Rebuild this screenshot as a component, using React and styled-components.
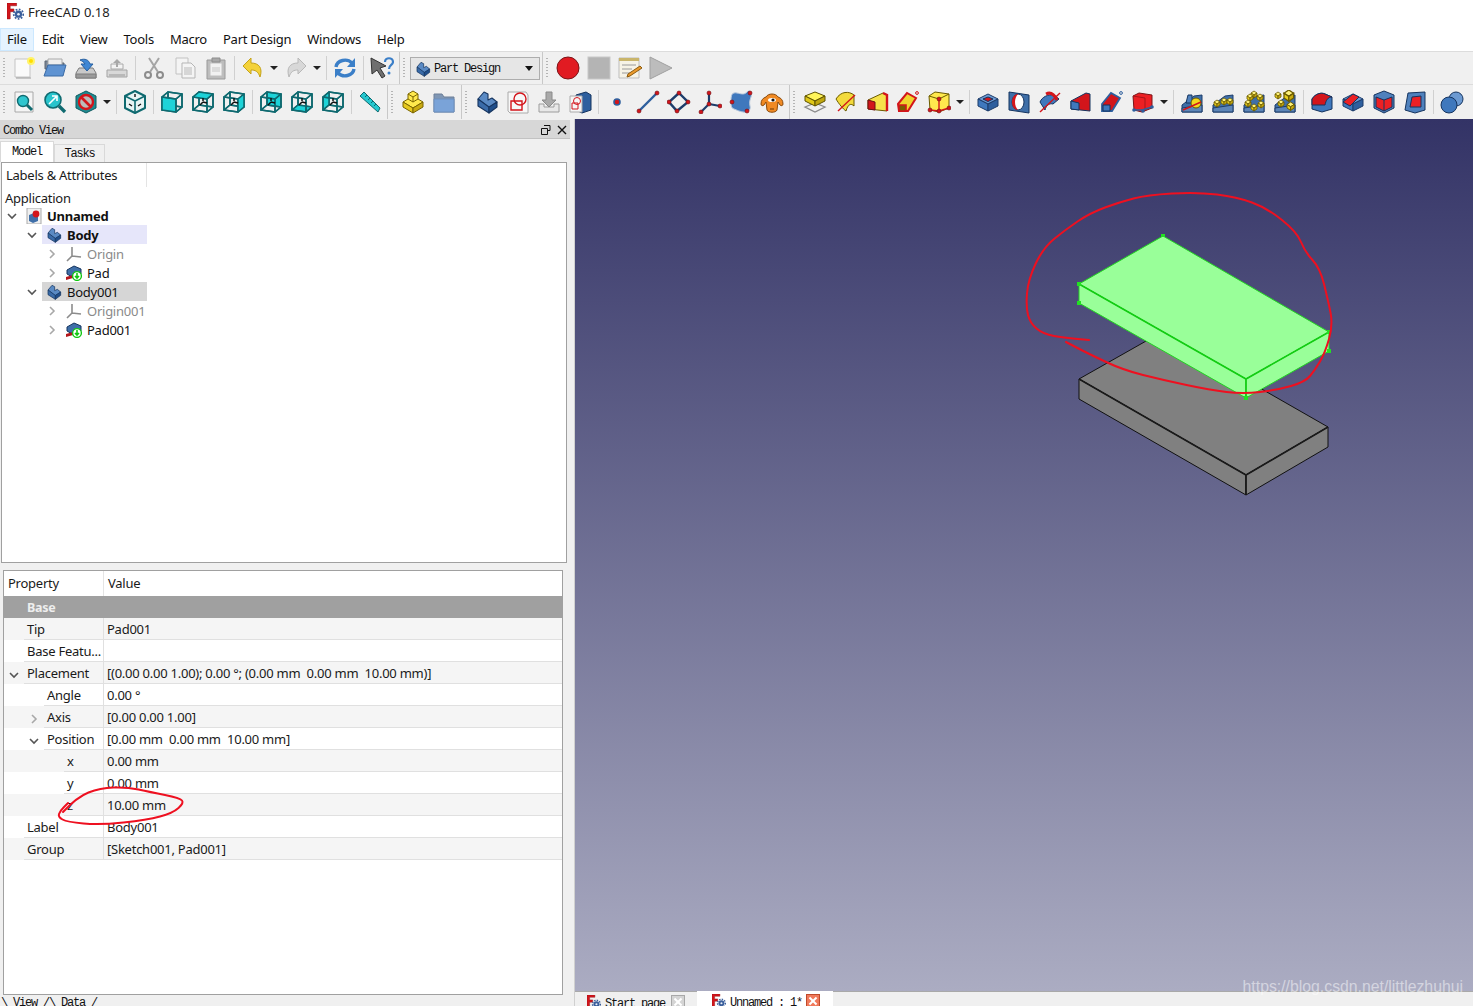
import React from "react";
import styled, { createGlobalStyle } from "styled-components";

const GlobalStyle = createGlobalStyle`
  html, body {
    margin: 0;
    padding: 0;
    background: #f0f0f0;
    font-family: "Noto Sans", "Open Sans", sans-serif;
    font-size: 13px;
    letter-spacing: -0.25px;
    color: #1a1a1a;
  }
`;

/* ---------- icon parts ---------- */

const Box = ({ top, left, right, line = "#1d3d6b" }) => (
  <g stroke={line} strokeWidth="1" strokeLinejoin="round">
    <polygon points="12,4 22,9 12,14 2,9" fill={top} />
    <polygon points="2,9 12,14 12,21 2,16" fill={left} />
    <polygon points="12,14 22,9 22,16 12,21" fill={right} />
  </g>
);

const ViewCube = ({ face }) => {
  const fill = (name) => (face === name ? "#1ed3d8" : "none");
  const inner = face === "front" || face === "none" ? null : "#0f6a70";
  return (
    <g stroke="#0f6a70" strokeWidth="1.6" strokeLinejoin="round">
      <polygon points="8,2 22,4 22,17 8,15" fill={fill("back")} />
      <polygon points="2,7 8,2 8,15 2,20" fill={fill("left")} />
      <polygon points="2,20 16,22 22,17 8,15" fill={fill("bottom")} />
      <polygon points="2,7 16,9 16,22 2,20" fill={fill("front")} />
      <polygon points="2,7 8,2 22,4 16,9" fill={fill("top")} />
      <polygon points="16,9 22,4 22,17 16,22" fill={fill("right")} />
      {inner && <path d="M12 8v3M12 12l-3 3M12 12l4 1" stroke="#111" strokeWidth="1.5" />}
    </g>
  );
};

const IsoCube = () => (
  <g strokeLinejoin="round">
    <polygon points="12,1 22,6 22,18 12,23 2,18 2,6" fill="#e8f4f4" stroke="#0f6a70" strokeWidth="2" />
    <path d="M2 6l10 5 10-5M12 11v12" fill="none" stroke="#0f6a70" strokeWidth="1.6" />
    <path d="M12 4v3M6 14l3 2M18 14l-3 2" stroke="#111" strokeWidth="1.4" />
  </g>
);

const Vertex = ({ x, y, r = 2 }) => <circle cx={x} cy={y} r={r} fill="#d3151b" stroke="#6d1014" strokeWidth=".6" />;

const Plate = ({ color = "#3f6fa8" }) => (
  <g stroke="#1d3d6b" strokeWidth="1">
    <polygon points="2,15 14,6 22,5 22,22 2,22" fill={color} />
    <polygon points="2,18 22,15 22,22 2,22" fill="#5d86b8" />
  </g>
);

const Gold = ({ x, y, s = 1 }) => (
  <g transform={`translate(${x} ${y}) scale(${s})`} stroke="#6b5b00" strokeWidth=".8">
    <polygon points="0,2 3,0 6,2 3,4" fill="#fff27a" />
    <polygon points="0,2 3,4 3,7 0,5" fill="#e8cf1e" />
    <polygon points="3,4 6,2 6,5 3,7" fill="#c9ac10" />
  </g>
);

const icons = {
  fresh: (
    <>
      <path d="M3 3h15v18H3z" fill="#fafafa" stroke="#c4c4c4" />
      <path d="M4 22h15" stroke="#999" />
      <circle cx="19" cy="5" r="4" fill="#fff36a" />
      <circle cx="19" cy="5" r="2" fill="#ffdd00" />
    </>
  ),
  open: (
    <>
      <path d="M2 5h7l2 2h10v6H2z" fill="#7c8796" stroke="#5d6672" />
      <path d="M5 3h14v6H5z" fill="#eee" stroke="#aaa" />
      <path d="M5 9h18l-3 11H1z" fill="#5f93d2" stroke="#3a6aa5" />
    </>
  ),
  save: (
    <>
      <path d="M5 12h14l3 5v5H2v-5z" fill="#c9c9c9" stroke="#7d7d7d" />
      <path d="M2 18h20v4H2z" fill="#9a9a9a" stroke="#7d7d7d" />
      <path d="M6 4c5-2 9 0 10 4h3l-6 7-6-7h4c-1-2-3-3-5-4z" fill="#3f87d4" stroke="#275f9f" />
    </>
  ),
  saveAs: (
    <>
      <path d="M6 8h12v5H6z" fill="#f3f3f3" stroke="#aaa" />
      <path d="M2 14h20v7H2z" fill="#d8d8d8" stroke="#a3a3a3" />
      <path d="M4 18h16v3H4z" fill="#b8b8b8" />
      <path d="M12 3l4 4h-3v4h-2V7H8z" fill="#a8a8a8" />
    </>
  ),
  cut: (
    <g fill="none" stroke="#a4a4a4" strokeWidth="2">
      <circle cx="6" cy="19" r="3" stroke="#8c8c8c" />
      <circle cx="18" cy="19" r="3" stroke="#8c8c8c" />
      <path d="M8 16L17 2M16 16L7 2" />
    </g>
  ),
  copy: (
    <>
      <path d="M3 2h12v16H3z" fill="#f4f4f4" stroke="#c2c2c2" />
      <path d="M9 7h9l4 4v11H9z" fill="#f4f4f4" stroke="#b5b5b5" />
      <path d="M11 11h8v8h-8z" fill="#d6d6d6" />
    </>
  ),
  paste: (
    <>
      <path d="M3 4h18v19H3z" fill="#bdbdbd" stroke="#9a9a9a" />
      <path d="M6 7h12v13H6z" fill="#f2f2f2" stroke="#c0c0c0" />
      <path d="M8 2h8v4H8z" fill="#a8a8a8" stroke="#8c8c8c" />
      <path d="M8 11h8v5H8z" fill="#dcdcdc" />
    </>
  ),
  undo: (
    <path d="M2 10l8-8v5c8 0 12 5 9 14-2-6-5-7-9-7v4z" fill="#f4d23a" stroke="#c4a21a" strokeLinejoin="round" />
  ),
  redo: (
    <path d="M22 10l-8-8v5C6 7 2 12 5 21c2-6 5-7 9-7v4z" fill="#d8d8d8" stroke="#b8b8b8" strokeLinejoin="round" />
  ),
  refresh: (
    <g fill="none" stroke="#3b7fc8" strokeWidth="3.4">
      <path d="M3 11c1-7 11-9 16-4" />
      <path d="M21 13c-1 7-11 9-16 4" />
      <path d="M22 2v9h-8z" fill="#3b7fc8" stroke="none" />
      <path d="M2 22v-9h8z" fill="#3b7fc8" stroke="none" />
    </g>
  ),
  whatsThis: (
    <>
      <path d="M1 2l15 8-6 2 5 8-3 2-5-8-5 4z" fill="#6f6f6f" stroke="#333" strokeLinejoin="round" />
      <path d="M15 6c0-5 8-5 8 0 0 3-4 3-4 7" fill="none" stroke="#3b7fc8" strokeWidth="2.2" />
      <circle cx="19" cy="17" r="1.5" fill="#3b7fc8" />
    </>
  ),
  fitAll: (
    <>
      <path d="M3 2h18v20H3z" fill="#f5f5f5" stroke="#a8a8a8" />
      <circle cx="11" cy="11" r="5.5" fill="#2fc6cf" stroke="#0f6a70" strokeWidth="1.4" />
      <path d="M15 15l5 5" stroke="#0f6a70" strokeWidth="3" />
    </>
  ),
  fitSel: (
    <>
      <circle cx="10" cy="10" r="8" fill="#29c4cc" stroke="#0f6a70" strokeWidth="1.6" />
      <path d="M6 14l7-7M9 6h5v5" fill="none" stroke="#fff" strokeWidth="1.6" />
      <path d="M16 16l6 6" stroke="#0f6a70" strokeWidth="3.4" />
    </>
  ),
  noDraw: (
    <>
      <polygon points="12,1 22,6 22,18 12,23 2,18 2,6" fill="#1c8c92" stroke="#0f5a60" />
      <circle cx="12" cy="12" r="7" fill="#bbb" stroke="#d3151b" strokeWidth="2.4" />
      <path d="M7 7l10 10" stroke="#d3151b" strokeWidth="2.6" />
    </>
  ),
  iso: <IsoCube />,
  front: <ViewCube face="front" />,
  top: <ViewCube face="top" />,
  right: <ViewCube face="right" />,
  rear: <ViewCube face="back" />,
  bottom: <ViewCube face="bottom" />,
  left: <ViewCube face="left" />,
  measure: (
    <>
      <polygon points="2,6 6,2 22,18 20,22" fill="#26c7cf" stroke="#0f6a70" />
      <path d="M7 7l2-2M10 10l2-2M13 13l2-2M16 16l2-2" stroke="#0f6a70" />
    </>
  ),
  part: (
    <g stroke="#7a6500" strokeWidth="1" strokeLinejoin="round">
      <polygon points="7,4 12,1 17,4 17,9 22,12 12,18 2,12 7,9" fill="#ffe94d" />
      <path d="M7 4l5 3 5-3M7 9l5 3 5-3M12 7v5" fill="none" />
      <polygon points="2,12 12,18 12,23 2,17" fill="#e6c81e" />
      <polygon points="12,18 22,12 22,17 12,23" fill="#c9aa12" />
    </g>
  ),
  folder: (
    <>
      <path d="M2 4h8l2 3h10v15H2z" fill="#7f96b4" stroke="#6c7f98" />
      <path d="M2 9h20v13H2z" fill="#7aa3d8" stroke="#6d8fbd" />
    </>
  ),
  body: (
    <g stroke="#15345f" strokeWidth="1.1" strokeLinejoin="round">
      <polygon points="3,9 9,2 13,4 13,10 17,8 22,12 14,18" fill="#5a8ac4" />
      <polygon points="3,9 14,17 14,23 3,16" fill="#3a6ba8" />
      <polygon points="14,17 22,12 22,17 14,23" fill="#1f4e8b" />
    </g>
  ),
  sketch: (
    <>
      <path d="M2 2h18l2 3v18H4l-2-2z" fill="#f7f7f7" stroke="#aaa" />
      <path d="M5 11h11v9H5z" fill="none" stroke="#d3151b" strokeWidth="1.4" />
      <circle cx="14" cy="9" r="6" fill="none" stroke="#d3151b" strokeWidth="1.4" />
    </>
  ),
  importShape: (
    <>
      <path d="M2 14h5v3h10v-3h5v8H2z" fill="#e8e8e8" stroke="#9c9c9c" />
      <path d="M9 2h6v8h4l-7 7-7-7h4z" fill="#a9a9a9" stroke="#8a8a8a" />
    </>
  ),
  bodySketch: (
    <>
      <polygon points="8,5 18,2 23,5 23,20 14,23 8,20" fill="#2e5f9e" stroke="#15345f" />
      <path d="M2 6h12v16H2z" fill="#f6f6f6" stroke="#aaa" />
      <circle cx="9" cy="11" r="3.5" fill="none" stroke="#d3151b" />
      <path d="M4 13h6v6H4z" fill="none" stroke="#d3151b" />
    </>
  ),
  point: <circle cx="12" cy="12" r="3" fill="#d3151b" stroke="#2e5f9e" strokeWidth="1.6" />,
  line: (
    <>
      <path d="M3 21L21 3" stroke="#2e5f9e" strokeWidth="2.4" />
      <Vertex x={3} y={21} />
      <Vertex x={21} y={3} />
    </>
  ),
  plane: (
    <>
      <polygon points="12,3 21,12 10,21 2,12" fill="none" stroke="#1d3d6b" strokeWidth="2.4" />
      <Vertex x={12} y={3} />
      <Vertex x={21} y={12} />
      <Vertex x={10} y={21} />
      <Vertex x={2} y={12} />
    </>
  ),
  axes: (
    <>
      <path d="M11 3v11M11 14l11 2M11 14l-8 8" stroke="#1d3d6b" strokeWidth="2.2" />
      <Vertex x={11} y={3} />
      <Vertex x={11} y={14} />
      <Vertex x={22} y={16} />
      <Vertex x={3} y={22} />
    </>
  ),
  blob: (
    <>
      <path d="M2 11c0-6 1-9 6-8s7 2 10-1 5 2 4 5-2 5-1 9-2 7-7 6-6-2-9-3-3-4-3-8z" fill="#3f78bd" stroke="#b9c8dc" />
      <Vertex x={21} y={3} />
      <Vertex x={3} y={12} />
      <Vertex x={18} y={21} />
    </>
  ),
  gnu: (
    <>
      <path d="M1 14c0-4 2-6 5-7 2-4 10-4 12 0 3 1 5 3 5 7 0 2-2 2-3 1l-2-3-1 8c-1 3-9 3-10 0l-1-8-2 3c-1 1-3 1-3-1z" fill="#f08a24" stroke="#8a4a0c" />
      <ellipse cx="12" cy="10" rx="4" ry="2" fill="#fff" />
      <circle cx="13" cy="10" r="1.6" fill="#111" />
      <path d="M10 19h4" stroke="#6d3806" />
    </>
  ),
  datumPlane: (
    <>
      <polygon points="2,17 12,13 22,17 12,22" fill="none" stroke="#8a8a8a" strokeWidth="1.3" />
      <g stroke="#5e5200" strokeWidth="1" strokeLinejoin="round">
        <polygon points="12,2 22,6 12,11 2,6" fill="#fff45a" />
        <polygon points="2,6 12,11 12,16 2,11" fill="#e0c818" />
        <polygon points="12,11 22,6 22,11 12,16" fill="#bfa60f" />
      </g>
    </>
  ),
  revolve: (
    <>
      <path d="M2 9c5-8 13-8 18-4v11c-3-3-6-2-8 5C9 19 5 14 2 9z" fill="#f3da3c" stroke="#6b5b00" />
      <path d="M4 21l17-16" stroke="#d3151b" strokeWidth="1.4" />
    </>
  ),
  loft: (
    <>
      <polygon points="3,10 18,3 22,5 22,21 3,19" fill="#f6e24a" stroke="#6b5b00" />
      <polygon points="3,10 10,12 10,20 3,19" fill="#d3151b" stroke="#6d1014" />
      <path d="M18 3l4 2v16" fill="none" stroke="#d3151b" strokeWidth="2.4" />
    </>
  ),
  pipe: (
    <>
      <path d="M2 14l9-11 9 5-8 13H3z" fill="#f0d42e" stroke="#d3151b" strokeWidth="2" />
      <path d="M3 15h7v6H3z" fill="#7a5c00" stroke="#d3151b" strokeWidth="1.6" />
      <circle cx="21" cy="3" r="1.4" fill="none" stroke="#d3151b" />
    </>
  ),
  primitive: (
    <>
      <polygon points="2,6 8,2 22,4 22,18 12,22 3,20" fill="#ffe94d" stroke="#6b5b00" />
      <path d="M2 6l10 3 10-5" fill="none" stroke="#6b5b00" />
      <path d="M12 9v12M3 20l9 1 10-3" fill="none" stroke="#d3151b" strokeWidth="1.4" />
      <Vertex x={12} y={9} />
      <Vertex x={3} y={20} />
      <Vertex x={12} y={21} />
      <Vertex x={22} y={18} />
    </>
  ),
  pocket: (
    <>
      <Box top="#6c9ad2" left="#3f78bd" right="#2e5f9e" />
      <polygon points="12,7 17,9 12,11.5 7,9" fill="#d3151b" stroke="#15345f" />
    </>
  ),
  hole: (
    <>
      <polygon points="2,2 22,5 22,23 2,20" fill="#3f6fa8" stroke="#15345f" />
      <ellipse cx="11" cy="12" rx="6" ry="8" fill="#fff" stroke="#15345f" />
      <path d="M11 4c-4 0-6 4-6 8s2 8 6 8c-2-2-3-5-3-8s1-6 3-8z" fill="#d3151b" />
    </>
  ),
  groove: (
    <>
      <path d="M2 12c2-5 8-8 14-7l5 4-6 5c-3-1-7 1-8 6z" fill="#3f78bd" stroke="#15345f" />
      <path d="M8 4c4-2 8 0 11 6" fill="none" stroke="#d3151b" strokeWidth="3" />
      <path d="M2 22L22 3" stroke="#d3151b" strokeWidth="1.4" />
    </>
  ),
  subLoft: (
    <>
      <polygon points="2,11 17,3 21,4 21,21 2,19" fill="#d3151b" stroke="#15345f" />
      <polygon points="2,11 10,13 10,20 2,19" fill="#3f78bd" stroke="#15345f" />
    </>
  ),
  subPipe: (
    <>
      <path d="M2 14l9-11 9 5-8 13H2z" fill="#d3151b" stroke="#2e5f9e" strokeWidth="1.8" />
      <path d="M3 15h7v6H3z" fill="#3f78bd" stroke="#15345f" />
      <circle cx="21" cy="3" r="1.4" fill="none" stroke="#2e5f9e" />
    </>
  ),
  subPrimitive: (
    <>
      <polygon points="2,6 8,3 21,5 21,18 11,22 3,20" fill="#ec2024" stroke="#7a1418" />
      <path d="M2 6l12 2v13" fill="none" stroke="#a5161b" />
      <path d="M3 20h8l10-3" stroke="#2e5f9e" strokeWidth="1.4" fill="none" />
      <circle cx="3" cy="20" r="1.8" fill="#2e5f9e" />
      <circle cx="12" cy="21" r="1.8" fill="#2e5f9e" />
      <circle cx="21" cy="17" r="1.8" fill="#2e5f9e" />
    </>
  ),
  mirror: (
    <>
      <Plate />
      <path d="M8 5h4v8H6z" fill="#4f81bd" stroke="#15345f" />
      <ellipse cx="16" cy="13" rx="5" ry="5" fill="#f5d81f" stroke="#6b5b00" />
      <path d="M3 20l18-8" stroke="#d3151b" strokeWidth="1.4" />
    </>
  ),
  linear: (
    <>
      <Plate />
      <Gold x={3} y={10} s={1} />
      <Gold x={10} y={8} s={1} />
      <Gold x={16} y={8} s={1} />
    </>
  ),
  polar: (
    <>
      <Plate />
      <Gold x={9} y={1} s={1} />
      <Gold x={15} y={4} s={1} />
      <Gold x={16} y={11} s={1} />
      <Gold x={9} y={14} s={1} />
      <Gold x={3} y={10} s={1} />
      <Gold x={5} y={4} s={1} />
    </>
  ),
  multi: (
    <>
      <Plate />
      <Gold x={2} y={2} s={1} />
      <Gold x={11} y={0} s={1.6} />
      <Gold x={5} y={10} s={1} />
      <Gold x={14} y={12} s={1.2} />
    </>
  ),
  fillet: (
    <>
      <path d="M2 9c3-5 9-7 13-5l7 3v12l-10 3-10-3z" fill="#3f78bd" stroke="#15345f" />
      <path d="M2 9c3-5 9-7 13-5l7 3c-4 0-6 3-7 8L2 15z" fill="#d3151b" stroke="#15345f" />
    </>
  ),
  chamfer: (
    <>
      <Box top="#6c9ad2" left="#3f78bd" right="#2e5f9e" />
      <polygon points="2,12 12,4 18,7 9,16" fill="#ec2024" stroke="#15345f" />
    </>
  ),
  draft: (
    <>
      <polygon points="12,1 22,5 22,18 12,23 2,18 2,5" fill="#4f81bd" stroke="#15345f" />
      <polygon points="4,7 12,10 20,7 20,17 12,21 4,17" fill="#ec2024" stroke="#15345f" />
      <path d="M12 10v11" stroke="#15345f" />
    </>
  ),
  thickness: (
    <>
      <polygon points="5,3 22,2 22,20 12,23 2,20" fill="#4f81bd" stroke="#15345f" />
      <polygon points="9,7 18,6 18,17 7,17" fill="#ec2024" stroke="#15345f" />
    </>
  ),
  boolean: (
    <>
      <circle cx="16" cy="9" r="7" fill="#6c9ad2" stroke="#15345f" />
      <circle cx="9" cy="15" r="8" fill="#3f78bd" stroke="#15345f" />
    </>
  ),
};

const Logo = ({ size = 16 }) => (
  <svg width={size} height={size} viewBox="0 0 16 16">
    <path d="M0 0h9v2.6H3v3h3.5v2.6H3V15H0z" fill="#d3151b" stroke="#8f1015" strokeWidth=".5" />
    <circle cx="10.8" cy="10.5" r="3.4" fill="#3a5f9c" />
    <circle cx="10.8" cy="10.5" r="4.5" fill="none" stroke="#3a5f9c" strokeWidth="1.6" strokeDasharray="1.6 1.4" />
    <circle cx="10.8" cy="10.5" r="1.2" fill="#e8eef6" />
  </svg>
);

const Icon = ({ name, size = 24 }) => (
  <svg width={size} height={size} viewBox="0 0 24 24">
    {icons[name]}
  </svg>
);

/* ---------- data ---------- */

const fileGroup = ["fresh", "open", "save", "saveAs", "|", "cut", "copy", "paste", "|", "undo", "v", "redo", "v", "|", "refresh", "|", "whatsThis"];
const macroGroup = ["record", "stop", "edit", "play"];
const bottomGroups = [
  ["fitAll", "fitSel", "noDraw", "v", "|", "iso", "|", "front", "top", "right", "|", "rear", "bottom", "left", "|", "measure"],
  ["part", "folder"],
  ["body", "sketch", "importShape", "bodySketch", "|", "point", "line", "plane", "axes", "blob", "gnu"],
  ["datumPlane", "revolve", "loft", "pipe", "primitive", "v", "|", "pocket", "hole", "groove", "subLoft", "subPipe", "subPrimitive", "v", "|", "mirror", "linear", "polar", "multi", "|", "fillet", "chamfer", "draft", "thickness", "|", "boolean"],
];

const macroIcons = {
  record: <circle cx="12" cy="12" r="11" fill="#e11b22" stroke="#7a1418" />,
  stop: <rect x="1" y="1" width="22" height="22" fill="#b4b4b4" stroke="#c8c8c8" />,
  edit: (
    <>
      <path d="M1 2h20v20H1z" fill="#f6f3e6" stroke="#bdbdbd" />
      <path d="M1 2h20v3H1z" fill="#c9b56b" />
      <path d="M4 9h14M4 13h10M4 17h8" stroke="#9a9a9a" />
      <path d="M10 18l12-8 2 2-12 8-3 1z" fill="#ec9a2a" stroke="#8a5a10" />
    </>
  ),
  play: <polygon points="1,1 23,12 1,23" fill="#bcbcbc" stroke="#a0a0a0" />,
};

const menuItems = ["File", "Edit", "View", "Tools", "Macro", "Part Design", "Windows", "Help"];

const treeRows = [
  { depth: 0, open: true, icon: "doc", label: "Unnamed", bold: true },
  { depth: 1, open: true, icon: "body", label: "Body", bold: true, tone: "#e6e6fa" },
  { depth: 2, open: false, icon: "origin", label: "Origin", dim: true },
  { depth: 2, open: false, icon: "pad", label: "Pad" },
  { depth: 1, open: true, icon: "body", label: "Body001", tone: "#d6d6d6" },
  { depth: 2, open: false, icon: "origin", label: "Origin001", dim: true },
  { depth: 2, open: false, icon: "pad", label: "Pad001" },
];

const propRows = [
  { depth: 0, name: "Tip", value: "Pad001" },
  { depth: 0, name: "Base Featu...", value: "" },
  { depth: 0, name: "Placement", value: "[(0.00 0.00 1.00); 0.00 °; (0.00 mm  0.00 mm  10.00 mm)]", arrow: "open" },
  { depth: 1, name: "Angle", value: "0.00 °" },
  { depth: 1, name: "Axis", value: "[0.00 0.00 1.00]", arrow: "closed" },
  { depth: 1, name: "Position", value: "[0.00 mm  0.00 mm  10.00 mm]", arrow: "open" },
  { depth: 2, name: "x", value: "0.00 mm" },
  { depth: 2, name: "y", value: "0.00 mm" },
  { depth: 2, name: "z", value: "10.00 mm" },
  { depth: 0, name: "Label", value: "Body001" },
  { depth: 0, name: "Group", value: "[Sketch001, Pad001]" },
];

/* hand drawn red marks, page coordinates */
const bigLoop = [
  [1089, 340], [1065, 338], [1043, 334], [1030, 323], [1026, 307], [1028, 280], [1043, 248], [1065, 230],
  [1090, 213], [1120, 202], [1147, 195], [1197, 192], [1237, 197], [1267, 208], [1297, 232], [1305, 252],
  [1320, 268], [1328, 300], [1333, 325], [1325, 353], [1315, 370], [1305, 382], [1277, 390], [1243, 394],
  [1210, 390], [1163, 380], [1123, 370], [1087, 353], [1066, 342],
];
const smallLoop = [
  [63, 812], [77, 797], [100, 788], [127, 787], [150, 792], [180, 798], [184, 803], [173, 813], [147, 820],
  [100, 825], [67, 822], [58, 817], [60, 811], [68, 803],
];

const smooth = (pts) => {
  let d = `M${pts[0][0]} ${pts[0][1]}`;
  for (let i = 1; i < pts.length - 1; i++) {
    const mx = (pts[i][0] + pts[i + 1][0]) / 2;
    const my = (pts[i][1] + pts[i + 1][1]) / 2;
    d += ` Q${pts[i][0]} ${pts[i][1]} ${mx} ${my}`;
  }
  const last = pts[pts.length - 1];
  return `${d} L${last[0]} ${last[1]}`;
};

/* ---------- small parts ---------- */

const Chevron = ({ open, light }) => (
  <svg width="10" height="10" viewBox="0 0 10 10">
    <path
      d={open ? "M1 3l4 4 4-4" : "M3 1l4 4-4 4"}
      fill="none"
      stroke={light ? "#a8a8a8" : "#555"}
      strokeWidth="1.6"
    />
  </svg>
);

const TreeIcon = ({ kind }) => {
  if (kind === "body") return <Icon name="body" size={16} />;
  if (kind === "origin")
    return (
      <svg width="16" height="16" viewBox="0 0 16 16">
        <path d="M6 1v9M6 10l9 1M6 10l-5 5" fill="none" stroke="#8c8c8c" strokeWidth="1.6" />
      </svg>
    );
  if (kind === "pad")
    return (
      <svg width="16" height="16" viewBox="0 0 16 16">
        <polygon points="1,5 8,1 15,4 15,9 8,13 1,9" fill="#3f6fa8" stroke="#15345f" />
        <path d="M0 12l7-2v3l-7 2z" fill="#b3161b" />
        <circle cx="11" cy="11" r="4.4" fill="#fff" stroke="#12c812" strokeWidth="1.4" />
        <path d="M11 8v5M9 11l2 2 2-2" fill="none" stroke="#12c812" strokeWidth="1.6" />
      </svg>
    );
  return (
    <svg width="16" height="16" viewBox="0 0 16 16">
      <path d="M1 0h14v16H1z" fill="#f0f0f0" stroke="#aaa" />
      <polygon points="3,7 8,5 12,7 12,13 7,15 3,13" fill="#3f6fa8" />
      <circle cx="10" cy="6" r="3.4" fill="#d3151b" />
    </svg>
  );
};

const ToolRowItems = ({ items, glyphs = icons }) =>
  items.map((item, i) => {
    if (item === "|") return <ToolSep key={i} />;
    if (item === "v") return <DropArrow key={i} />;
    return (
      <ToolButton key={i}>
        <svg width="24" height="24" viewBox="0 0 24 24">
          {glyphs[item]}
        </svg>
      </ToolButton>
    );
  });

const App = () => {
  return (
    <Page>
      <GlobalStyle />
      <TitleBar>
        <Logo size={17} />
        <TitleText>FreeCAD 0.18</TitleText>
      </TitleBar>
      <MenuBar>
        {menuItems.map((m) => (
          <MenuItem key={m} $active={m === "File"}>
            {m}
          </MenuItem>
        ))}
      </MenuBar>

      <ToolRow $h={33}>
        <ToolGroup $first>
          <Grip />
          <ToolRowItems items={fileGroup} />
        </ToolGroup>
        <ToolGroup>
          <Grip />
          <WorkbenchCombo>
            <Icon name="body" size={16} />
            <span>Part Design</span>
            <ComboCaret />
          </WorkbenchCombo>
        </ToolGroup>
        <ToolGroup $last>
          <Grip />
          <ToolRowItems items={macroGroup} glyphs={macroIcons} />
        </ToolGroup>
      </ToolRow>

      <ToolRow $h={35}>
        {bottomGroups.map((g, i) => (
          <ToolGroup key={i} $first={i === 0} $last={i === bottomGroups.length - 1}>
            <Grip />
            <ToolRowItems items={g} />
          </ToolGroup>
        ))}
      </ToolRow>

      <Workspace>
        <LeftDock>
          <DockHeader>
            <MonoLabel>Combo View</MonoLabel>
            <DockControls>
              <svg width="10" height="10" viewBox="0 0 10 10">
                <path d="M3 .5h6v5H7M.5 3.5h6v6h-6z" fill="none" stroke="#111" />
              </svg>
              <svg width="10" height="10" viewBox="0 0 10 10">
                <path d="M1 1l8 8M9 1L1 9" stroke="#111" strokeWidth="1.4" />
              </svg>
            </DockControls>
          </DockHeader>
          <DockTabs>
            <DockTab $active>Model</DockTab>
            <DockTab>Tasks</DockTab>
          </DockTabs>

          <TreeBox>
            <TreeHead>Labels &amp; Attributes</TreeHead>
            <TreeRoot>Application</TreeRoot>
            {treeRows.map((r) => (
              <TreeRow key={r.label} $depth={r.depth}>
                <TreeArrow>
                  <Chevron open={r.open} light={!r.open} />
                </TreeArrow>
                <TreeItem $tone={r.tone}>
                  <TreeIcon kind={r.icon} />
                  <TreeLabel $bold={r.bold} $dim={r.dim}>
                    {r.label}
                  </TreeLabel>
                </TreeItem>
              </TreeRow>
            ))}
          </TreeBox>

          <PropertyBox>
            <PropHead>
              <PropHeadCell $w={100}>Property</PropHeadCell>
              <PropHeadCell>Value</PropHeadCell>
            </PropHead>
            <PropGroup>Base</PropGroup>
            {propRows.map((r, i) => (
              <PropRow key={r.name} $alt={i % 2 === 0}>
                <PropName $depth={r.depth}>
                  {r.arrow && (
                    <PropArrow $depth={r.depth}>
                      <Chevron open={r.arrow === "open"} light={r.arrow !== "open"} />
                    </PropArrow>
                  )}
                  <PropNameText>{r.name}</PropNameText>
                </PropName>
                <PropValue>{r.value}</PropValue>
              </PropRow>
            ))}
          </PropertyBox>

          <DataTabs>\ View /\ Data /</DataTabs>
        </LeftDock>

        <ViewArea>
          <Scene>
            <svg width="898" height="872" viewBox="575 119 898 872">
              <g stroke="#111" strokeWidth="1">
                <polygon points="1162,332 1328,427 1246,475 1079,379" fill="#808080" />
                <polygon points="1079,379 1246,475 1246,495 1079,399" fill="#808080" />
                <polygon points="1246,475 1328,427 1328,447 1246,495" fill="#808080" />
              </g>
              <path d="M1079 379L1246 475L1328 427M1246 475V495" fill="none" stroke="#1a1a1a" strokeWidth="1.6" />
              <g fill="#99ff99" stroke="#22d422" strokeWidth="1">
                <polygon points="1163,236 1329,332 1246,379 1079,284" />
                <polygon points="1079,284 1246,379 1246,398 1079,303" />
                <polygon points="1246,379 1329,332 1329,351 1246,398" />
              </g>
              <path d="M1079 284L1246 379L1329 332M1246 379V398" fill="none" stroke="#14cc14" strokeWidth="1.6" />
              <g fill="#22e022">
                <rect x="1077" y="282" width="4" height="4" />
                <rect x="1077" y="301" width="4" height="4" />
                <rect x="1327" y="330" width="4" height="4" />
                <rect x="1327" y="349" width="4" height="4" />
                <rect x="1244" y="396" width="4" height="4" />
                <rect x="1161" y="234" width="4" height="3" />
              </g>
            </svg>
            <Watermark>https://blog.csdn.net/littlezhuhui</Watermark>
          </Scene>
          <DocTabs>
            <DocTab>
              <Logo size={14} />
              <MonoText>Start page</MonoText>
              <CloseBox />
            </DocTab>
            <DocTab $active>
              <Logo size={14} />
              <MonoText>Unnamed : 1*</MonoText>
              <CloseBox $active />
            </DocTab>
          </DocTabs>
        </ViewArea>
      </Workspace>

      <InkLayer width="1473" height="1006" viewBox="0 0 1473 1006">
        <path d={smooth(bigLoop)} />
        <path d={smooth(smallLoop)} />
      </InkLayer>
    </Page>
  );
};

export default App;

const mono = `"Liberation Mono", "DejaVu Sans Mono", monospace`;

const Page = styled.div`
  position: relative;
  width: 1473px;
  height: 1006px;
  overflow: hidden;
  display: flex;
  flex-direction: column;
  background: #f0f0f0;
`;

const TitleBar = styled.div`
  height: 28px;
  background: #fff;
  display: flex;
  align-items: center;
  gap: 4px;
  padding: 0 0 5px 7px;
  box-sizing: border-box;
  flex: none;
`;

const TitleText = styled.span`
  font-size: 13px;
  letter-spacing: 0;
  color: #222;
`;

const MenuBar = styled.div`
  height: 23px;
  background: #fff;
  display: flex;
  flex: none;
`;

const MenuItem = styled.div`
  line-height: ${(p) => (p.$active ? "21px" : "23px")};
  color: #111;
  background: ${(p) => (p.$active ? "#e5f3ff" : "transparent")};
  border: ${(p) => (p.$active ? "1px solid #cce8ff" : "none")};
  padding-left: ${(p) => (p.$active ? "6px" : "8px")};
  padding-right: ${(p) => (p.$active ? "6px" : "8px")};
`;

const ToolRow = styled.div`
  height: ${(p) => p.$h}px;
  flex: none;
  display: flex;
  background: #f0f0f0;
  border-top: 1px solid #dcdcdc;
  box-sizing: border-box;
`;

const ToolGroup = styled.div`
  display: flex;
  align-items: center;
  height: 100%;
  padding: 0 2px 0 ${(p) => (p.$first ? 8 : 9)}px;
  position: relative;
  border-right: ${(p) => (p.$last ? "none" : "1px solid #c8c8c8")};
`;

const Grip = styled.div`
  position: absolute;
  left: 3px;
  top: 6px;
  bottom: 6px;
  width: 2px;
  background: repeating-linear-gradient(to bottom, #b4b4b4 0 1px, transparent 1px 3px);
`;

const ToolButton = styled.div`
  width: 31px;
  height: 26px;
  flex: none;
  display: flex;
  align-items: center;
  justify-content: center;
`;

const ToolSep = styled.div`
  width: 6px;
  height: 24px;
  flex: none;
  display: flex;
  justify-content: center;
  &::before {
    content: "";
    width: 1px;
    background: #d0d0d0;
  }
`;

const DropArrow = styled.div`
  width: 12px;
  flex: none;
  display: flex;
  justify-content: center;
  &::before {
    content: "";
    border-left: 4px solid transparent;
    border-right: 4px solid transparent;
    border-top: 4px solid #222;
  }
`;

const WorkbenchCombo = styled.div`
  width: 130px;
  height: 23px;
  box-sizing: border-box;
  margin: 1px 0 0 1px;
  border: 1px solid #adadad;
  background: #e6e6e6;
  display: flex;
  align-items: center;
  gap: 3px;
  padding: 0 6px 0 4px;
  font-family: ${mono};
  font-size: 12px;
  letter-spacing: -1.2px;
  white-space: pre;
  color: #111;
`;

const ComboCaret = styled.div`
  margin-left: auto;
  border-left: 4px solid transparent;
  border-right: 4px solid transparent;
  border-top: 5px solid #111;
`;

const Workspace = styled.div`
  flex: 1;
  min-height: 0;
  display: flex;
`;

const LeftDock = styled.div`
  width: 574px;
  flex: none;
  display: flex;
  flex-direction: column;
  border-right: 1px solid #d0d0d0;
  box-sizing: content-box;
`;

const DockHeader = styled.div`
  height: 19px;
  margin-top: 1px;
  flex: none;
  display: flex;
  align-items: center;
  justify-content: space-between;
  background: #d7d7d7;
  border-bottom: 1px solid #c2c2c2;
  box-sizing: border-box;
  padding: 1px 3px 0;
  width: 570px;
`;

const MonoLabel = styled.span`
  font-family: ${mono};
  font-size: 12px;
  letter-spacing: -1.2px;
  padding-top: 2px;
  color: #111;
`;

const DockControls = styled.div`
  display: flex;
  gap: 6px;
  align-items: center;
`;

const DockTabs = styled.div`
  height: 23px;
  flex: none;
  display: flex;
  align-items: flex-end;
  width: 570px;
`;

const DockTab = styled.div`
  height: ${(p) => (p.$active ? 21 : 18)}px;
  width: ${(p) => (p.$active ? 54 : 51)}px;
  line-height: ${(p) => (p.$active ? 20 : 18)}px;
  text-align: center;
  box-sizing: border-box;
  background: ${(p) => (p.$active ? "#fff" : "#f0f0f0")};
  border: 1px solid #d9d9d9;
  border-bottom: none;
  font-family: ${mono};
  font-size: 12px;
  letter-spacing: -1.2px;
  color: #111;
`;

const TreeBox = styled.div`
  width: 566px;
  height: 401px;
  margin-left: 1px;
  flex: none;
  box-sizing: border-box;
  background: #fff;
  border: 1px solid #a0a0a0;
`;

const TreeHead = styled.div`
  width: 145px;
  height: 24px;
  line-height: 25px;
  padding-left: 4px;
  box-sizing: border-box;
  border-right: 1px solid #e4e4e4;
`;

const TreeRoot = styled.div`
  height: 18px;
  line-height: 20px;
  margin-top: 1px;
  padding-left: 3px;
`;

const TreeRow = styled.div`
  height: 19px;
  display: flex;
  align-items: center;
  width: 145px;
  padding-left: ${(p) => 5 + p.$depth * 20}px;
  box-sizing: border-box;
`;

const TreeArrow = styled.div`
  width: 15px;
  flex: none;
  display: flex;
  align-items: center;
`;

const TreeItem = styled.div`
  flex: 1;
  height: 19px;
  display: flex;
  align-items: center;
  gap: 5px;
  padding-left: 4px;
  background: ${(p) => p.$tone || "transparent"};
`;

const TreeLabel = styled.span`
  font-weight: ${(p) => (p.$bold ? 700 : 400)};
  color: ${(p) => (p.$dim ? "#8a8a8a" : "#111")};
`;

const PropertyBox = styled.div`
  width: 560px;
  height: 425px;
  margin: 7px 0 0 3px;
  flex: none;
  box-sizing: border-box;
  background: #fff;
  border: 1px solid #a0a0a0;
`;

const PropHead = styled.div`
  height: 25px;
  display: flex;
  background: #fff;
`;

const PropHeadCell = styled.div`
  width: ${(p) => (p.$w ? `${p.$w}px` : "auto")};
  box-sizing: border-box;
  line-height: 24px;
  padding-left: 4px;
  border-right: ${(p) => (p.$w ? "1px solid #e4e4e4" : "none")};
`;

const PropGroup = styled.div`
  height: 22px;
  line-height: 23px;
  background: #a0a0a0;
  color: #eee;
  font-weight: 700;
  font-size: 12.5px;
  padding-left: 23px;
`;

const PropRow = styled.div`
  height: 22px;
  display: flex;
  background: ${(p) => (p.$alt ? "#f5f5f5" : "#fff")};
`;

const PropName = styled.div`
  width: 100px;
  flex: none;
  box-sizing: border-box;
  position: relative;
  padding-left: ${(p) => 20 + p.$depth * 20}px;
  border-right: 1px solid #e0e0e0;
`;

const PropArrow = styled.div`
  position: absolute;
  left: ${(p) => 5 + p.$depth * 20}px;
  top: 4px;
`;

const PropNameText = styled.div`
  height: 22px;
  line-height: 23px;
  padding-left: 3px;
  border-bottom: 1px solid #e0e0e0;
  box-sizing: border-box;
  white-space: nowrap;
`;

const PropValue = styled.div`
  flex: 1;
  line-height: 23px;
  padding-left: 3px;
  border-bottom: 1px solid #e0e0e0;
  box-sizing: border-box;
  white-space: pre;
`;

const DataTabs = styled.div`
  padding: 1px 0 0 1px;
  font-family: ${mono};
  font-size: 12px;
  letter-spacing: -1.2px;
  white-space: pre;
  color: #111;
`;

const ViewArea = styled.div`
  flex: 1;
  min-width: 0;
  display: flex;
  flex-direction: column;
`;

const Scene = styled.div`
  position: relative;
  height: 872px;
  flex: none;
  background: linear-gradient(to bottom, #333366, #abacc2);
  svg {
    display: block;
  }
`;

const Watermark = styled.div`
  position: absolute;
  right: 10px;
  bottom: -5px;
  font-family: "Liberation Sans", Arial, sans-serif;
  font-size: 15.8px;
  letter-spacing: 0;
  line-height: 18px;
  color: rgba(255, 255, 255, 0.5);
`;

const DocTabs = styled.div`
  flex: 1;
  display: flex;
  padding-left: 9px;
  gap: 8px;
  border-top: 1px solid #a9a9a9;
`;

const DocTab = styled.div`
  height: 20px;
  width: ${(p) => (p.$active ? 136 : 105)}px;
  margin-top: ${(p) => (p.$active ? "-1px" : "0")};
  flex: none;
  box-sizing: border-box;
  display: flex;
  align-items: flex-start;
  gap: 4px;
  padding: 3px 0 0 ${(p) => (p.$active ? 15 : 3)}px;
  background: ${(p) => (p.$active ? "#fff" : "#f0f0f0")};
`;

const MonoText = styled.span`
  font-family: ${mono};
  font-size: 12px;
  line-height: 14px;
  letter-spacing: -1.2px;
  white-space: pre;
  padding-top: 2px;
  color: #111;
`;

const CloseBox = styled.div`
  width: 14px;
  height: 14px;
  margin-left: ${(p) => (p.$active ? 0 : 2)}px;
  flex: none;
  box-sizing: border-box;
  border: 1px solid ${(p) => (p.$active ? "#c04a2a" : "#a8a8a8")};
  background: ${(p) => (p.$active ? "#f0795a" : "#d4d4d4")};
  position: relative;
  &::before,
  &::after {
    content: "";
    position: absolute;
    left: 1px;
    top: 5px;
    width: 10px;
    height: 2px;
    background: #fff;
    transform: rotate(45deg);
  }
  &::after {
    transform: rotate(-45deg);
  }
`;

const InkLayer = styled.svg`
  position: absolute;
  left: 0;
  top: 0;
  pointer-events: none;
  path {
    fill: none;
    stroke: #ee1020;
    stroke-width: 2;
    stroke-linecap: round;
    stroke-linejoin: round;
  }
`;
